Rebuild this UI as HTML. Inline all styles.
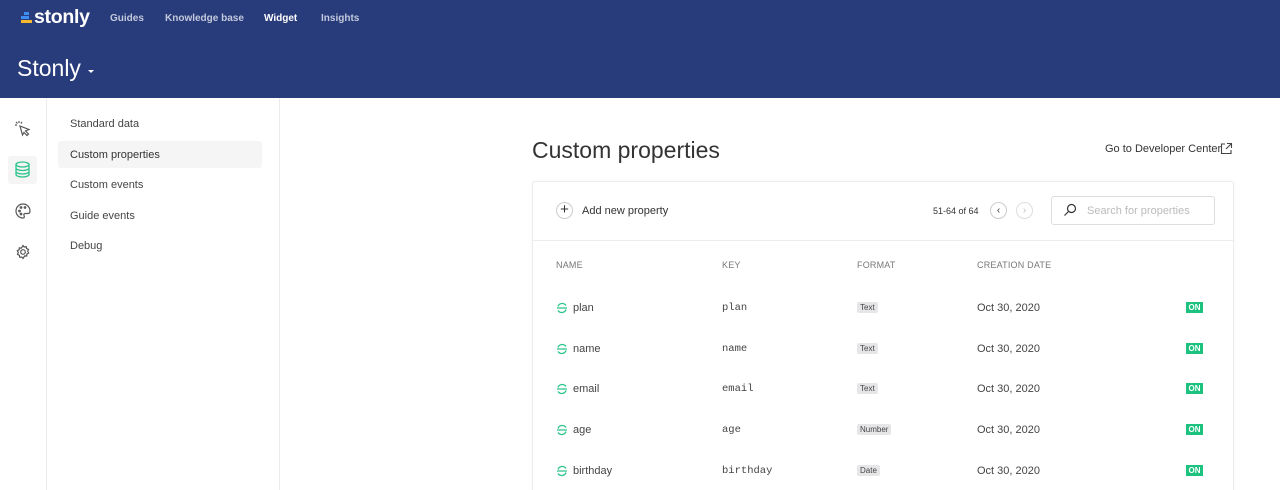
<!DOCTYPE html>
<html><head><style>
*{box-sizing:border-box;margin:0;padding:0}
html,body{width:1280px;height:490px;overflow:hidden}
body{background:#fff;font-family:"Liberation Sans",sans-serif;color:#333;position:relative}
.hdr{position:absolute;left:0;top:0;width:1280px;height:98px;background:#283b7a}
.abs{position:absolute;white-space:nowrap}
.nav{font-size:10px;font-weight:bold;color:#c3c9dd;top:13px}
.rail{position:absolute;left:0;top:98px;width:47px;height:392px;border-right:1px solid #ececec}
.sub{position:absolute;left:47px;top:98px;width:233px;height:392px;border-right:1px solid #ececec}
.si{position:absolute;left:23px;font-size:11px;color:#444}
.card{position:absolute;left:532px;top:181px;width:702px;height:320px;border:1px solid #ececec;border-radius:3px;box-shadow:0 0 4px rgba(0,0,0,.04)}
.th{position:absolute;top:260px;font-size:9px;color:#777;letter-spacing:.2px}
.td{position:absolute;font-size:11px;color:#444}
.mono{font-family:"Liberation Mono",monospace;font-size:10.5px}
.tag{position:absolute;font-size:8px;background:#e6e6e8;color:#444;padding:1px 3px;border-radius:2px}
.on{position:absolute;left:1186px;width:17px;height:11px;background:#1cc27d;color:#fff;font-size:8px;font-weight:bold;text-align:center;line-height:11px}
</style></head><body>
<div class="hdr"></div>
<svg class="abs" style="left:20px;top:11px" width="13" height="13"><rect x="4" y="1" width="5" height="3" fill="#3d8ef0"/><rect x="1" y="5" width="8" height="3" fill="#3d8ef0"/><rect x="1" y="9" width="11" height="3" fill="#f5b82e"/></svg>
<div class="abs" style="left:34px;top:6px;font-size:19.5px;font-weight:bold;color:#fff;letter-spacing:-.3px">stonly</div>
<div class="abs nav" style="left:110px">Guides</div>
<div class="abs nav" style="left:165px">Knowledge base</div>
<div class="abs nav" style="left:264px;color:#fff">Widget</div>
<div class="abs nav" style="left:321px">Insights</div>
<div class="abs" style="left:17px;top:55px;font-size:23px;color:#fff">Stonly</div>
<div class="abs" style="left:88px;top:70px;width:0;height:0;border-left:3px solid transparent;border-right:3px solid transparent;border-top:3px solid #fff"></div>
<div class="rail">
<svg class="abs" style="left:14px;top:22px" width="18" height="18" fill="none" stroke="#555" stroke-width="1.2"><path d="M6 6l9 3.5-3.5 1.5 3 3-1.5 1.5-3-3L8.5 15z"/><path d="M1 5h2M5 1v2M2 2l1.5 1.5M8 2l-1 1.5"/></svg>
<div class="abs" style="left:8px;top:58px;width:29px;height:28px;background:#f5f5f5;border-radius:3px"></div>
<svg class="abs" style="left:14px;top:63px" width="17" height="18" fill="none" stroke="#2bc48a" stroke-width="1.3"><ellipse cx="8.5" cy="3.5" rx="6.5" ry="2.5"/><path d="M2 3.5v10c0 1.4 2.9 2.5 6.5 2.5s6.5-1.1 6.5-2.5v-10M2 7c0 1.4 2.9 2.5 6.5 2.5S15 8.4 15 7M2 10.5c0 1.4 2.9 2.5 6.5 2.5s6.5-1.1 6.5-2.5"/></svg>
<svg class="abs" style="left:15px;top:105px" width="16" height="16" fill="none" stroke="#555" stroke-width="1.2"><path d="M8 1a7 7 0 1 0 0 14c1.5 0 1.5-1.5 1-2.5s0-2 1.5-2H13c1.5 0 2-1 2-2.5A7 7 0 0 0 8 1z"/><circle cx="4.5" cy="8" r=".8"/><circle cx="6" cy="4.5" r=".8"/><circle cx="10" cy="4.5" r=".8"/><circle cx="6" cy="11" r=".8"/></svg>
<svg class="abs" style="left:15px;top:146px" width="16" height="16" fill="none" stroke="#555" stroke-width="1.2"><circle cx="8" cy="8" r="2.3"/><path d="M8 1.5l1.2 1.6 2-.5.4 2 1.9.8-.8 1.9 1 1.7-1.8 1-.2 2-2-.1L8 14.5l-1.2-1.5-2 .3-.4-2-1.9-1 .8-1.8-1-1.8 1.8-.9.2-2 2 .4z"/></svg>
</div>
<div class="sub">
<div class="si" style="top:20px">Standard data</div>
<div class="abs" style="left:11px;top:43px;width:204px;height:27px;background:#f5f5f5;border-radius:3px"></div>
<div class="si" style="top:51px;color:#333">Custom properties</div>
<div class="si" style="top:81px">Custom events</div>
<div class="si" style="top:112px">Guide events</div>
<div class="si" style="top:142px">Debug</div>
</div>
<div class="abs" style="left:532px;top:137px;font-size:23px;color:#333">Custom properties</div>
<div class="abs" style="left:1105px;top:143px;font-size:11px;color:#333">Go to Developer Center</div>
<svg class="abs" style="left:1220px;top:142px" width="13" height="13" fill="none" stroke="#444" stroke-width="1.1"><path d="M5 2H1.5v9.5H11V8M7 1.5h4.5V6M11.5 1.5L6 7"/></svg>
<div class="card"></div>
<div class="abs" style="left:533px;top:240px;width:700px;height:1px;background:#ececec"></div>
<div class="abs" style="left:556px;top:202px;width:17px;height:17px;border:1px solid #ccc;border-radius:50%;font-size:15px;line-height:14px;text-align:center;color:#333">+</div>
<div class="abs" style="left:582px;top:205px;font-size:11px;color:#333">Add new property</div>
<div class="abs" style="left:933px;top:206px;font-size:9px;color:#333">51-64 of 64</div>
<div class="abs" style="left:990px;top:202px;width:17px;height:17px;border:1px solid #ccc;border-radius:50%;font-size:10px;line-height:15px;text-align:center;color:#333">&lsaquo;</div>
<div class="abs" style="left:1016px;top:202px;width:17px;height:17px;border:1px solid #ddd;border-radius:50%;font-size:10px;line-height:15px;text-align:center;color:#bbb">&rsaquo;</div>
<div class="abs" style="left:1051px;top:196px;width:164px;height:29px;border:1px solid #ddd;border-radius:3px"></div>
<svg class="abs" style="left:1063px;top:203px" width="14" height="14" fill="none" stroke="#333" stroke-width="1.2"><circle cx="8.5" cy="5.5" r="4"/><path d="M5.5 8.5L1.5 12.5"/></svg>
<div class="abs" style="left:1087px;top:205px;font-size:11px;color:#bbb">Search for properties</div>
<div class="th" style="left:556px">NAME</div>
<div class="th" style="left:722px">KEY</div>
<div class="th" style="left:857px">FORMAT</div>
<div class="th" style="left:977px">CREATION DATE</div>

<div id="rows"></div>
<script>
var r=[["plan","Text"],["name","Text"],["email","Text"],["age","Number"],["birthday","Date"]],h="";
r.forEach(function(x,i){var y=Math.round(310+i*40.7);
h+='<svg class="abs" style="left:556px;top:'+(y-8)+'px" width="12" height="12" fill="none" stroke="#2bc48a" stroke-width="1.3"><path d="M10 3.5A4.5 4.5 0 0 0 2 4.5M2 8.5a4.5 4.5 0 0 0 8-1M1 6h10"/></svg>';
h+='<div class="td" style="left:573px;top:'+(y-8)+'px">'+x[0]+'</div>';
h+='<div class="td mono" style="left:722px;top:'+(y-8)+'px">'+x[0]+'</div>';
h+='<div class="tag" style="left:857px;top:'+(y-8)+'px">'+x[1]+'</div>';
h+='<div class="td" style="left:977px;top:'+(y-8)+'px">Oct 30, 2020</div>';
h+='<div class="on" style="top:'+(y-8)+'px">ON</div>';});
document.getElementById("rows").innerHTML=h;
</script>
</body></html>
